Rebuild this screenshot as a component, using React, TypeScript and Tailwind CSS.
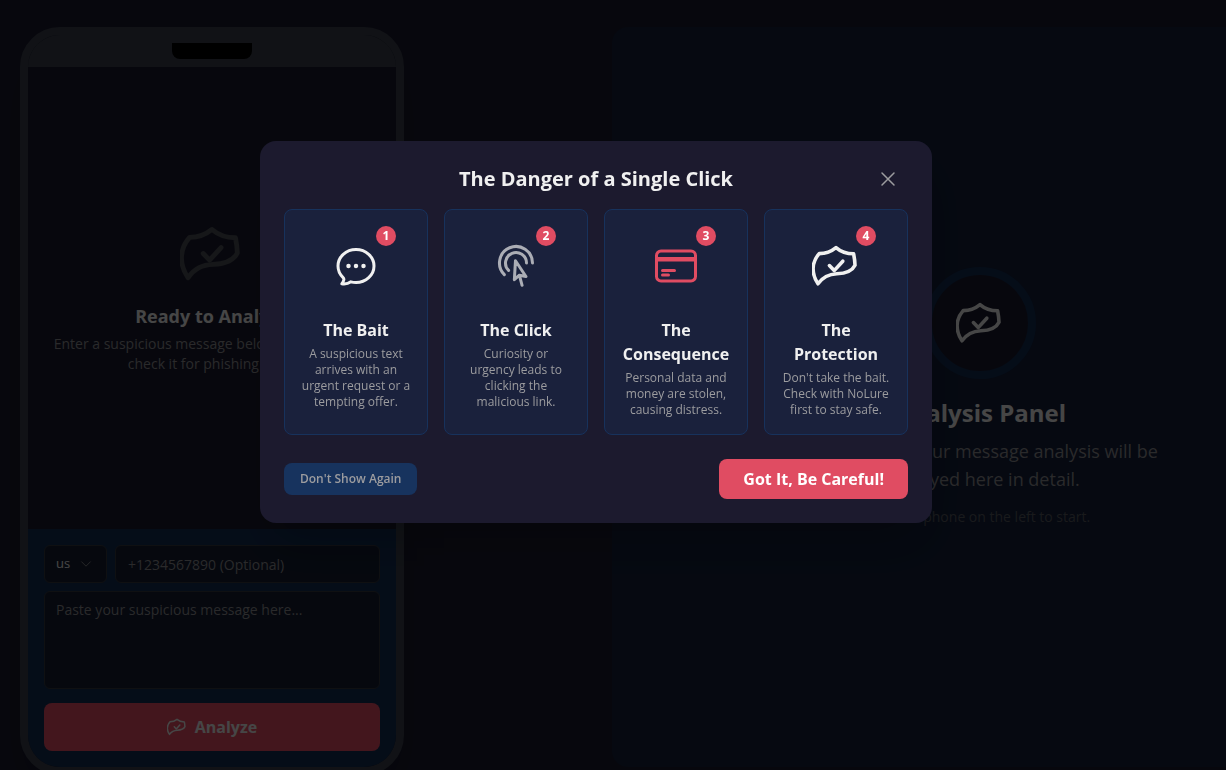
import type { ReactNode } from "react";
import {
  HiOutlineChatBubbleOvalLeftEllipsis,
  HiOutlineChevronDown,
  HiOutlineCreditCard,
  HiOutlineCursorArrowRipple,
  HiOutlineXMark,
} from "react-icons/hi2";

function ShieldIcon({ className }: { className?: string }) {
  return (
    <svg
      viewBox="0 0 24 24"
      fill="none"
      stroke="currentColor"
      strokeWidth={1.8}
      strokeLinecap="round"
      strokeLinejoin="round"
      className={className}
      aria-hidden="true"
    >
      <path d="M12 2.8C9.7 4.7 6.8 5.8 3.6 5.8C-.3 10.2-.4 15.8 3 20.9C5.6 17.3 8.4 16.1 12.4 15.9C17 15.7 20.2 14.3 21.5 11.6Q21.4 8.8 20.8 5.9C17.2 5.9 14.3 4.8 12 2.8Z" />
      <path d="M8.7 11.8l2.4 2.5 4.3-4.7" />
    </svg>
  );
}

type Step = { title: string; text: string; icon: ReactNode };

const steps: Step[] = [
  {
    title: "The Bait",
    text: "A suspicious text arrives with an urgent request or a tempting offer.",
    icon: <HiOutlineChatBubbleOvalLeftEllipsis className="size-12 text-[#f0f0f0]" />,
  },
  {
    title: "The Click",
    text: "Curiosity or urgency leads to clicking the malicious link.",
    icon: <HiOutlineCursorArrowRipple className="size-12 text-[#abadb5]" />,
  },
  {
    title: "The Consequence",
    text: "Personal data and money are stolen, causing distress.",
    icon: <HiOutlineCreditCard className="size-12 text-[#e04c62]" />,
  },
  {
    title: "The Protection",
    text: "Don't take the bait. Check with NoLure first to stay safe.",
    icon: <ShieldIcon className="size-12 text-[#f0f0f0]" />,
  },
];

function Phone() {
  return (
    <section className="flex h-[748px] w-96 shrink-0 flex-col overflow-hidden rounded-[40px] border-8 border-[#3a3f4b] bg-[#1a1a2e] shadow-2xl">
      <div className="flex h-8 shrink-0 items-center justify-center bg-[#3a3f4b]">
        <div className="h-4 w-20 rounded-b-lg bg-black" />
      </div>

      <div className="flex flex-1 flex-col items-center justify-center px-4 text-center">
        <ShieldIcon className="size-16 text-[#4b4e55]" />
        <h2 className="mt-4 text-lg font-bold text-[#eaeaea]">Ready to Analyze</h2>
        <p className="mt-1 text-sm text-[#8c8c90]">
          Enter a suspicious message below and we'll then
          <br />
          check it for phishing risks.
        </p>
      </div>

      <form className="flex flex-col bg-[#122c52] p-4" onSubmit={(e) => e.preventDefault()}>
        <div className="flex gap-2">
          <div className="relative">
            <select
              aria-label="Country"
              className="h-[38px] w-[63px] appearance-none rounded-md border border-[#33363f] bg-[#141c30] pl-[11px] text-[13px] text-[#eaeaea]"
            >
              <option>us</option>
            </select>
            <HiOutlineChevronDown className="pointer-events-none absolute top-3 right-3.5 size-3.5 text-[#8c8c90]" />
          </div>
          <input
            type="tel"
            aria-label="Phone number"
            placeholder="+1234567890 (Optional)"
            className="h-[38px] min-w-0 flex-1 rounded-md border border-[#33363f] bg-[#141c30] px-3 text-sm placeholder:text-[#8c8c90]"
          />
        </div>
        <textarea
          aria-label="Message"
          placeholder="Paste your suspicious message here..."
          className="mt-2 h-[98px] resize-none rounded-md border border-[#33363f] bg-[#141c30] px-[11px] py-2 text-sm placeholder:text-[#8c8c90]"
        />
        <button
          type="submit"
          className="mt-3.5 flex h-12 items-center justify-center gap-2 rounded-lg bg-[#e04c62] font-bold text-[#eaeaea]"
        >
          <ShieldIcon className="size-5" />
          Analyze
        </button>
      </form>
    </section>
  );
}

function AnalysisPanel() {
  return (
    <section className="ml-52 flex h-[740px] flex-1 flex-col items-center justify-center rounded-2xl bg-[#141f3a] text-center">
      <div className="flex size-28 items-center justify-center rounded-full border-8 border-[#122c52] bg-[#1a1a2e]">
        <ShieldIcon className="size-12 text-[#eaeaea]" />
      </div>
      <h2 className="mt-4 text-2xl leading-9 font-bold text-[#eaeaea]">Analysis Panel</h2>
      <p className="mt-1.5 text-lg text-[#8c8c90]">
        The result of your message analysis will be
        <br />
        displayed here in detail.
      </p>
      <p className="mt-3.5 text-sm text-[#55585f]">Use the phone on the left to start.</p>
    </section>
  );
}

function StepCard({ step, index }: { step: Step; index: number }) {
  return (
    <li className="flex flex-col items-center rounded-lg border border-[#17325c] bg-[#1a213c] p-4 text-center">
      <div className="relative flex size-20 items-center justify-center">
        {step.icon}
        <span className="absolute top-0 right-0 flex size-5 items-center justify-center rounded-full bg-[#e04c62] text-xs font-bold text-white">
          {index + 1}
        </span>
      </div>
      <h3 className="mt-3 font-bold text-[#f0f0f0]">{step.title}</h3>
      <p className="mt-1 text-xs text-[#9c9c9f]">{step.text}</p>
    </li>
  );
}

function DangerDialog() {
  return (
    <div className="fixed inset-0 flex items-center justify-center bg-black/70 pr-[34px] pb-[106px]">
      <div
        role="dialog"
        aria-modal="true"
        aria-labelledby="danger-title"
        className="w-full max-w-2xl rounded-2xl bg-[#1c1a2e] p-6 shadow-2xl"
      >
        <div className="grid grid-cols-[1fr_auto_1fr] items-center">
          <h2 id="danger-title" className="col-start-2 text-xl font-bold text-[#f0f0f0]">
            The Danger of a Single Click
          </h2>
          <button
            type="button"
            aria-label="Close"
            className="-my-2 justify-self-end p-2 text-[#9c9c9f]"
          >
            <HiOutlineXMark className="size-6" />
          </button>
        </div>

        <ol className="mt-4 grid grid-cols-4 gap-4">
          {steps.map((step, i) => (
            <StepCard key={step.title} step={step} index={i} />
          ))}
        </ol>

        <div className="mt-6 flex items-center justify-between">
          <button
            type="button"
            className="h-8 rounded-lg bg-[#17335e] px-4 text-xs font-semibold text-[#9c9c9f]"
          >
            Don't Show Again
          </button>
          <button type="button" className="h-10 rounded-lg bg-[#e04c62] px-6 font-bold text-white">
            Got It, Be Careful!
          </button>
        </div>
      </div>
    </div>
  );
}

export default function App() {
  return (
    <div className="h-screen overflow-hidden bg-[#1a1a2e] font-['Open_Sans','Noto_Sans',sans-serif]">
      <main className="flex min-w-[1368px] items-start px-5 pt-[27px]">
        <Phone />
        <AnalysisPanel />
      </main>
      <DangerDialog />
    </div>
  );
}
